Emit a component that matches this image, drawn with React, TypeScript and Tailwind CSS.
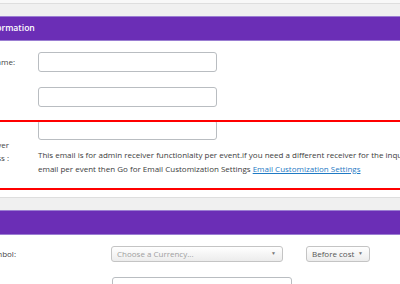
import React from 'react';

function Label({ text, width, pad }: { text: string; width: string; pad: string }) {
  return (
    <div className={`flex shrink-0 justify-end whitespace-nowrap ${width} ${pad}`}>
      <span>{text}</span>
    </div>
  );
}

function SelectBox({ text, className, muted }: { text: string; className: string; muted?: boolean }) {
  return (
    <div
      className={`flex h-[16px] items-center justify-between rounded-[3px] border border-[#c4c4c4] bg-gradient-to-b from-white to-[#ececec] pl-[5px] pr-[6px] ${className}`}
    >
      <span className={muted ? 'text-[#a0a0a0]' : 'text-[#555]'}>{text}</span>
      <span className="text-[5px] text-[#777]">▼</span>
    </div>
  );
}

export default function App() {
  return (
    <div
      className="relative h-[284px] w-[400px] overflow-hidden bg-white text-[8px] text-[#444]"
      style={{ fontFamily: '"Open Sans", "Noto Sans", sans-serif' }}
    >
      {/* first panel */}
      <div className="bg-[#f8f8f8] pt-[3px]">
        <div className="h-[13px] border-t border-[#dedede] bg-[#f0f0f0]" />
      </div>
      <div className="flex h-[25px] items-center border-y border-[#9b7ed2] bg-[#6b2eb6] text-[8.6px] font-semibold text-white">
        <span className="-ml-[15px] whitespace-nowrap">Information</span>
      </div>

      <div className="flex flex-col pt-[11px]">
        <div className="flex items-center">
          <Label text="Event Name:" width="w-[38px]" pad="pr-[23px]" />
          <div className="h-[20px] w-[179px] rounded-[3px] border border-[#b9bdc1] bg-white" />
        </div>
        <div className="mt-[15px] flex items-center">
          <Label text="" width="w-[38px]" pad="pr-[23px]" />
          <div className="h-[20px] w-[179px] rounded-[3px] border border-[#b9bdc1] bg-white" />
        </div>
        <div className="mt-[13px] flex">
          <div className="flex w-[38px] shrink-0 flex-col items-end pr-[29px] pt-[18px] leading-[13px]">
            <span className="whitespace-nowrap">Admin Receiver</span>
            <span className="whitespace-nowrap">Email Address :</span>
          </div>
          <div className="flex flex-col">
            <div className="h-[20px] w-[179px] rounded-[3px] border border-[#b9bdc1] bg-white" />
            <div className="mt-[8px] whitespace-nowrap leading-[13.5px] text-[#3c3c3c]">
              <div>
                This email is for admin receiver functionlaity per event.if you need a different receiver for the inquiry
              </div>
              <div>
                email per event then Go for Email Customization Settings{' '}
                <a className="text-[#1f7ac4] underline">Email Customization Settings</a>
              </div>
            </div>
          </div>
        </div>
      </div>

      {/* red annotation over the receiver row */}
      <div className="absolute left-[-10px] right-[-10px] top-[120px] h-[70px] border-y-2 border-[#ff0000]" />

      {/* second panel */}
      <div className="mt-[22px] h-[13px] border-t border-[#dedede] bg-[#f0f0f0]" />
      <div className="h-[25px] border-y border-[#9b7ed2] bg-[#6b2eb6]" />

      <div className="flex flex-col pt-[11px]">
        <div className="flex items-center">
          <Label text="Currency Symbol:" width="w-[111px]" pad="pr-[95px]" />
          <SelectBox text="Choose a Currency..." className="w-[172px]" muted />
          <SelectBox text="Before cost" className="ml-[23px] w-[64px]" />
        </div>
        <div className="mt-[15px] flex items-start">
          <Label text="Seats Available:" width="w-[112px]" pad="pr-[80px] pt-[3px]" />
          <div className="h-[20px] w-[180px] rounded-[3px] border border-[#b9bdc1] bg-white" />
        </div>
      </div>
    </div>
  );
}
